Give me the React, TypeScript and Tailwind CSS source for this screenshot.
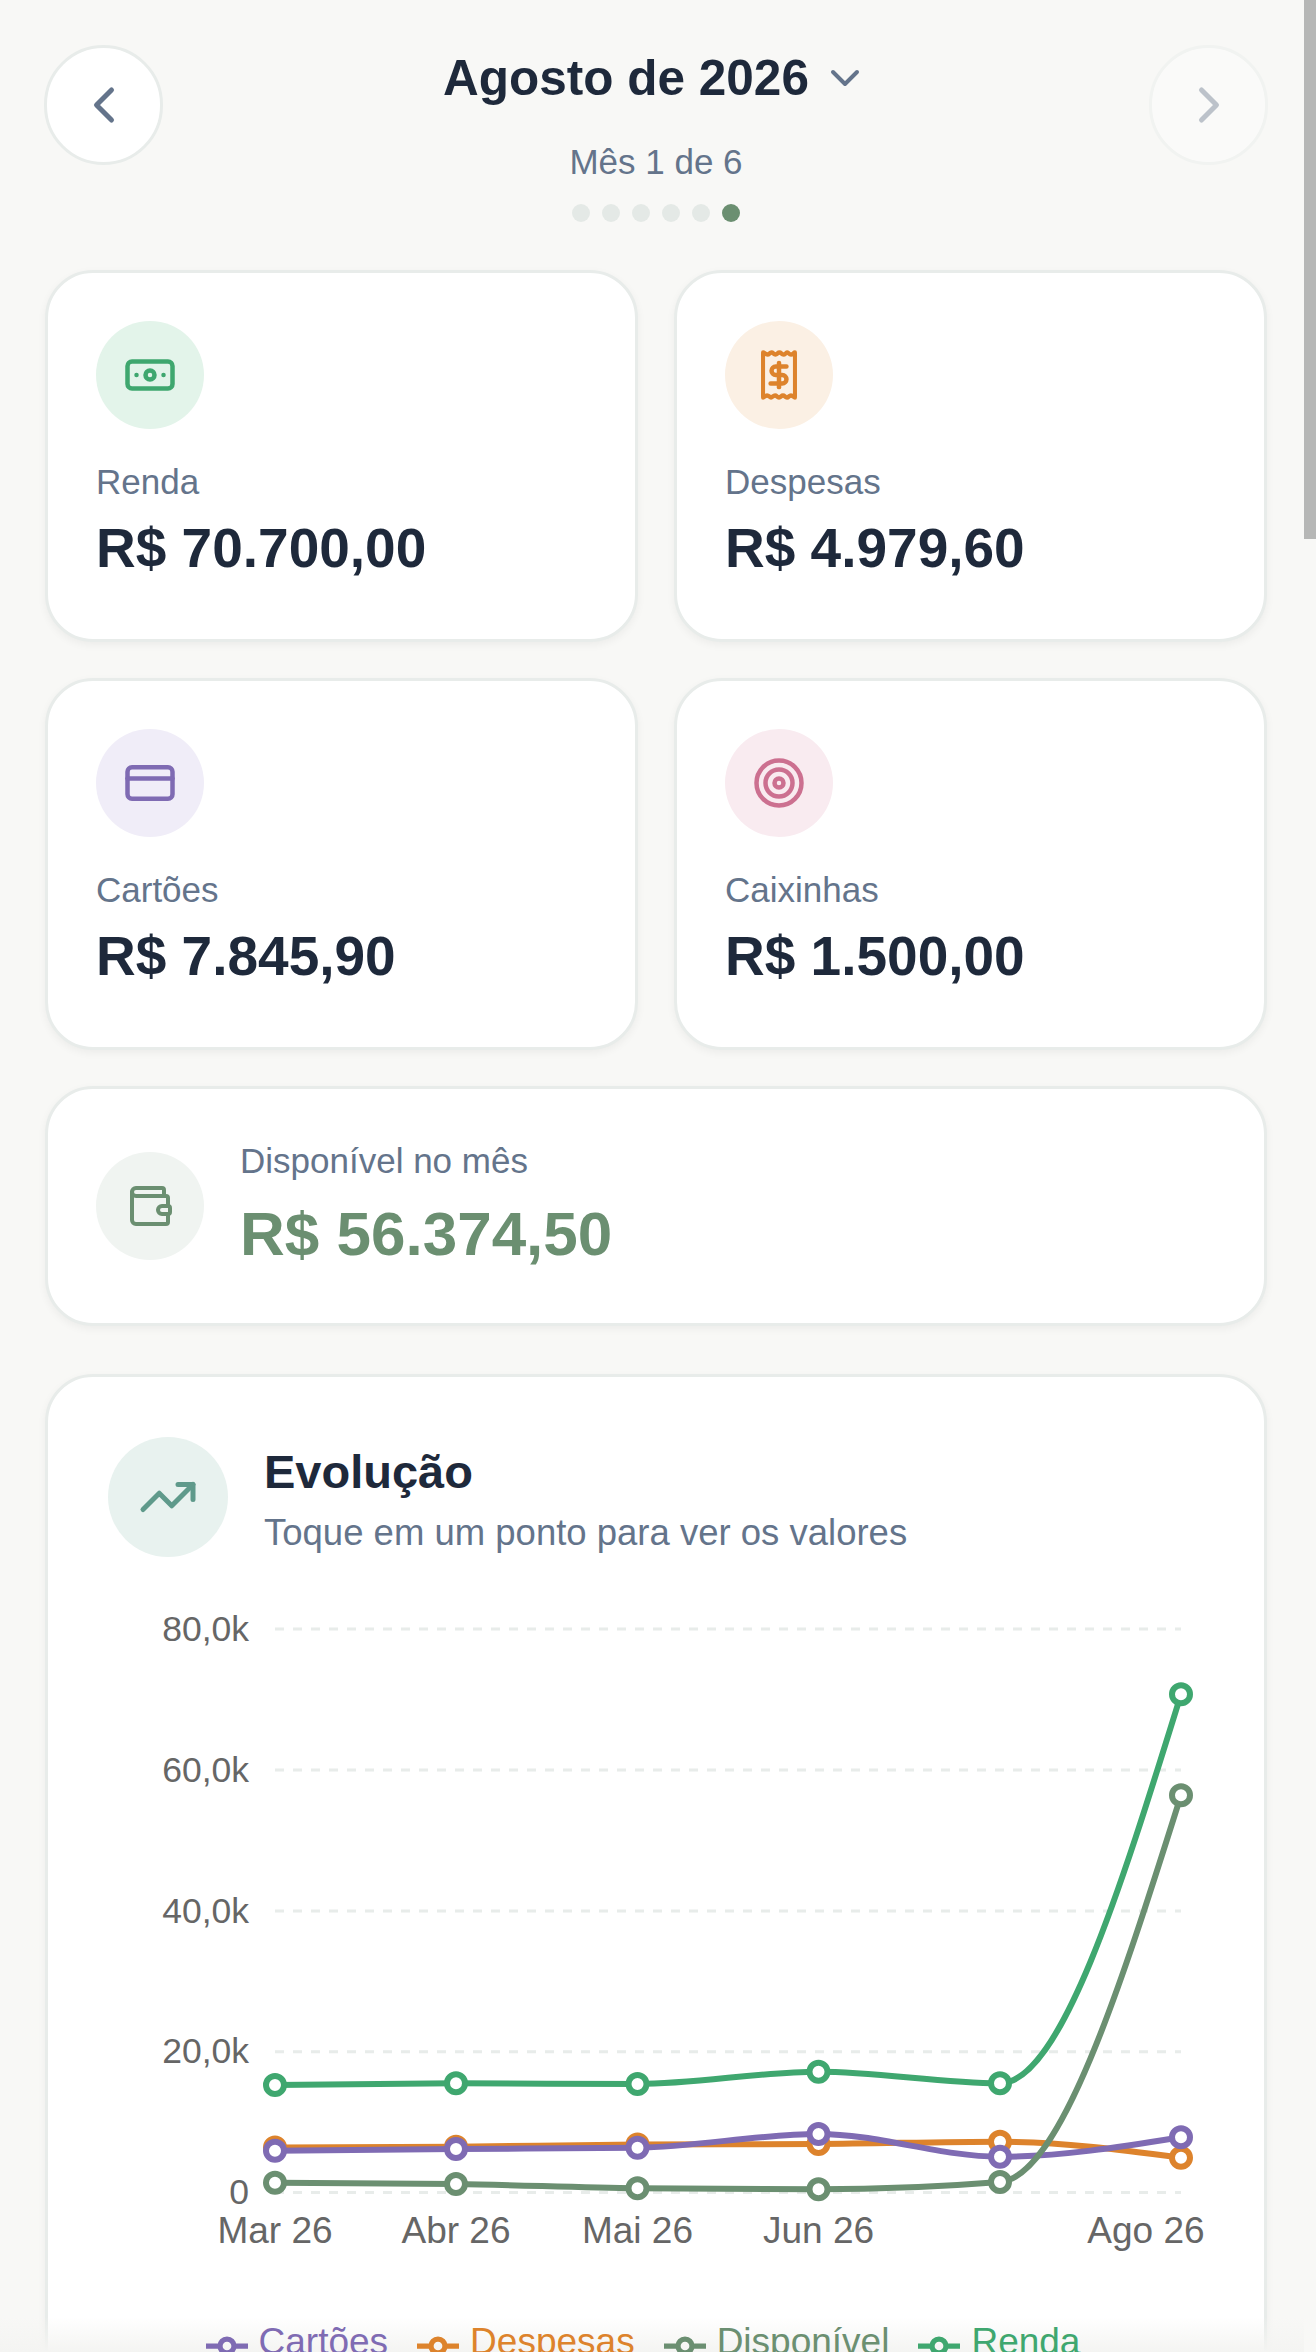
import React from 'react';
import { Banknote, ChevronDown, ChevronLeft, ChevronRight, CreditCard, Target, TrendingUp, Wallet } from 'lucide-react';

const xs = [275, 456, 637.5, 818.5, 1000, 1181];

// desenhados nesta ordem, a legenda vem em ordem alfabética
const series = [
  { name: 'Renda', color: '#3fa76f', ys: [2085, 2083.3, 2084, 2071.7, 2083.3, 1694.3] },
  { name: 'Despesas', color: '#dd832c', ys: [2147.5, 2146.7, 2144.5, 2144, 2141.7, 2157.7] },
  { name: 'Cartões', color: '#7f6bb3', ys: [2150.7, 2149, 2147.7, 2134, 2156.7, 2137.3] },
  { name: 'Disponível', color: '#6b8f71', ys: [2182.7, 2184, 2188.3, 2189.3, 2182, 1795.3] },
];

const legend = [series[2], series[1], series[3], series[0]];
const gridYs = [1629, 1770, 1911, 2051.7, 2192.6];
const yLabels = ['80,0k', '60,0k', '40,0k', '20,0k', '0'];

// mesma curva "monotoneX" do d3
function monotonePath(x: number[], y: number[]) {
  const n = x.length;
  const s = (i: number) => (y[i + 1] - y[i]) / (x[i + 1] - x[i]);
  const t: number[] = new Array(n).fill(0);
  for (let i = 1; i < n - 1; i++) {
    const h0 = x[i] - x[i - 1];
    const h1 = x[i + 1] - x[i];
    const s0 = s(i - 1);
    const s1 = s(i);
    const p = (s0 * h1 + s1 * h0) / (h0 + h1);
    t[i] = (Math.sign(s0) + Math.sign(s1)) * Math.min(Math.abs(s0), Math.abs(s1), 0.5 * Math.abs(p));
  }
  t[0] = (3 * s(0) - t[1]) / 2;
  t[n - 1] = (3 * s(n - 2) - t[n - 2]) / 2;
  let d = `M${x[0]},${y[0]}`;
  for (let i = 0; i < n - 1; i++) {
    const dx = (x[i + 1] - x[i]) / 3;
    d += `C${x[i] + dx},${y[i] + dx * t[i]},${x[i + 1] - dx},${y[i + 1] - dx * t[i + 1]},${x[i + 1]},${y[i + 1]}`;
  }
  return d;
}

function ReceiptIcon() {
  return (
    <svg width="56" height="56" viewBox="0 0 60 60" fill="none" stroke="currentColor" strokeWidth="4.8" strokeLinecap="round" strokeLinejoin="round">
      <path d="M11 6v48c2 0 2-2 4.75-2s2.75 2 4.75 2 2.25-2 4.75-2 2.25 2 4.75 2 2.25-2 4.75-2 2.25 2 4.75 2 2-2 4.75-2 2.75 2 4.75 2V6c-2 0-2 2-4.75 2S42 6 40 6s-2.25 2-4.75 2S33 6 30.5 6s-2.25 2-4.75 2-2.25-2-4.75-2-2 2-4.75 2S13 6 11 6Z" transform="translate(3 0) scale(0.9 1)" />
      <path d="M38 21H26.5a4.5 4.5 0 0 0 0 9h7a4.5 4.5 0 0 1 0 9H21" />
      <path d="M30 17v26" />
    </svg>
  );
}

function StatCard({ label, value, bg, color, icon }: { label: string; value: string; bg: string; color: string; icon: React.ReactNode }) {
  return (
    <div className="h-[372px] rounded-[48px] border-[3px] border-[#e8ecea] bg-white p-[48px] shadow-[0_3px_9px_rgba(0,0,0,0.05)]">
      <div className={`flex h-[108px] w-[108px] items-center justify-center rounded-full ${bg} ${color}`}>{icon}</div>
      <div className="mt-[26px] text-[35px] leading-[54px] text-[#64748b]">{label}</div>
      <div className="text-[55px] leading-[78px] font-bold text-[#1e293b]">{value}</div>
    </div>
  );
}

function LegendIcon({ color }: { color: string }) {
  return (
    <svg width="42" height="42" viewBox="0 0 32 32" className="mt-[8px] shrink-0" fill="none" stroke={color} strokeWidth="4">
      <path d="M0,16h10.67A5.33,5.33,0,1,1,21.33,16H32M21.33,16A5.33,5.33,0,1,1,10.67,16" />
    </svg>
  );
}

function Chart() {
  return (
    <svg viewBox="108 1593 1096 690" className="mt-[36px] block h-[690px] w-[1096px] overflow-visible">
      {gridYs.map((y) => (
        <line key={y} x1={275} x2={1181} y1={y} y2={y} stroke="#e8ecea" strokeWidth="3" strokeDasharray="9 9" />
      ))}
      {yLabels.map((label, i) => (
        <text key={label} x={249} y={gridYs[i] + 11.5} textAnchor="end" fontSize="35.5" fill="#666666">
          {label}
        </text>
      ))}
      {[
        ['Mar 26', 275],
        ['Abr 26', 456],
        ['Mai 26', 637.5],
        ['Jun 26', 818.5],
        ['Ago 26', 1146],
      ].map(([label, x]) => (
        <text key={label} x={x} y={2243} textAnchor="middle" fontSize="37" fill="#666666">
          {label}
        </text>
      ))}
      {series.map((s) => (
        <g key={s.name}>
          <path d={monotonePath(xs, s.ys)} fill="none" stroke={s.color} strokeWidth="6" />
          {s.ys.map((y, i) => (
            <circle key={i} cx={xs[i]} cy={y} r="9" fill="#ffffff" stroke={s.color} strokeWidth="6" />
          ))}
        </g>
      ))}
    </svg>
  );
}

export default function App() {
  return (
    <div className="relative flex h-[2352px] w-[1316px] overflow-hidden bg-[#f8f8f6] font-['Liberation_Sans',sans-serif]">
      <main className="w-[1304px] shrink-0 pt-[45px] pr-[37px] pl-[45px]">
        {/* cabeçalho do mês */}
        <header className="-mx-[1px] flex items-start justify-between">
          <button className="flex h-[120px] w-[119px] items-center justify-center rounded-full border-[3px] border-[#e8ecea] bg-white text-[#64748b]">
            <ChevronLeft size={60} strokeWidth={2} />
          </button>
          <div className="flex flex-col items-center">
            <div className="mt-[2px] flex h-[62px] items-center gap-[12px]">
              <span className="text-[49.5px] leading-[62px] font-bold text-[#1e293b]">Agosto de 2026</span>
              <ChevronDown size={48} strokeWidth={2} className="text-[#64748b]" />
            </div>
            <div className="mt-[26px] text-[35px] leading-[54px] text-[#64748b]">Mês 1 de 6</div>
            <div className="mt-[15px] flex gap-[12px]">
              <span className="h-[18px] w-[18px] rounded-full bg-[#e4e9e6]" />
              <span className="h-[18px] w-[18px] rounded-full bg-[#e4e9e6]" />
              <span className="h-[18px] w-[18px] rounded-full bg-[#e4e9e6]" />
              <span className="h-[18px] w-[18px] rounded-full bg-[#e4e9e6]" />
              <span className="h-[18px] w-[18px] rounded-full bg-[#e4e9e6]" />
              <span className="h-[18px] w-[18px] rounded-full bg-[#6b8f71]" />
            </div>
          </div>
          <button className="flex h-[120px] w-[119px] items-center justify-center rounded-full border-[3px] border-[#e8ecea] bg-white text-[#64748b] opacity-40">
            <ChevronRight size={60} strokeWidth={2} />
          </button>
        </header>

        <div className="mt-[48px] grid grid-cols-2 gap-[36px]">
          <StatCard label="Renda" value="R$ 70.700,00" bg="bg-[#e3f4ea]" color="text-[#3fa76f]" icon={<Banknote size={54} strokeWidth={2} />} />
          <StatCard label="Despesas" value="R$ 4.979,60" bg="bg-[#fbf0e4]" color="text-[#dd832c]" icon={<ReceiptIcon />} />
          <StatCard label="Cartões" value="R$ 7.845,90" bg="bg-[#f0edf8]" color="text-[#7f6bb3]" icon={<CreditCard size={54} strokeWidth={2} />} />
          <StatCard label="Caixinhas" value="R$ 1.500,00" bg="bg-[#f9ebf0]" color="text-[#cc7090]" icon={<Target size={54} strokeWidth={2} />} />
        </div>

        {/* disponível */}
        <div className="mt-[36px] flex h-[240px] items-center gap-[36px] rounded-[48px] border-[3px] border-[#e8ecea] bg-white px-[48px] shadow-[0_3px_9px_rgba(0,0,0,0.05)]">
          <div className="flex h-[108px] w-[108px] items-center justify-center rounded-full bg-[#f0f4f1] text-[#6b8f71]">
            <Wallet size={48} strokeWidth={2} />
          </div>
          <div className="pb-[6px]">
            <div className="text-[35px] leading-[54px] text-[#64748b]">Disponível no mês</div>
            <div className="mt-[7px] text-[62px] leading-[78px] font-bold text-[#6b8f71]">R$ 56.374,50</div>
          </div>
        </div>

        {/* gráfico */}
        <div className="mt-[48px] h-[1200px] rounded-[48px] border-[3px] border-[#e8ecea] bg-white p-[60px] shadow-[0_3px_9px_rgba(0,0,0,0.05)]">
          <div className="flex h-[120px] items-center gap-[36px]">
            <div className="flex h-[120px] w-[120px] items-center justify-center rounded-full bg-[#e8f2ef] text-[#5f9a8b]">
              <TrendingUp size={60} strokeWidth={2} />
            </div>
            <div className="pt-[8px]">
              <div className="text-[47px] leading-[60px] font-bold text-[#1e293b]">Evolução</div>
              <div className="mt-[4px] text-[36.5px] leading-[54px] text-[#64748b]">Toque em um ponto para ver os valores</div>
            </div>
          </div>
          <Chart />
          <div className="relative z-10 mt-[32px] flex justify-center gap-[29px] pr-[26px] text-[37px] leading-[54px]">
            {legend.map((s) => (
              <div key={s.name} className="flex items-center gap-[11px]" style={{ color: s.color }}>
                <LegendIcon color={s.color} />
                <span>{s.name}</span>
              </div>
            ))}
          </div>
        </div>
      </main>

      {/* barra de rolagem */}
      <div className="w-[12px] shrink-0">
        <div className="h-[539px] bg-[#b6b7b6]" />
      </div>

      <div className="absolute right-[12px] bottom-0 left-0 h-[35px] bg-gradient-to-b from-transparent to-[#f4f4f2]" />
    </div>
  );
}
